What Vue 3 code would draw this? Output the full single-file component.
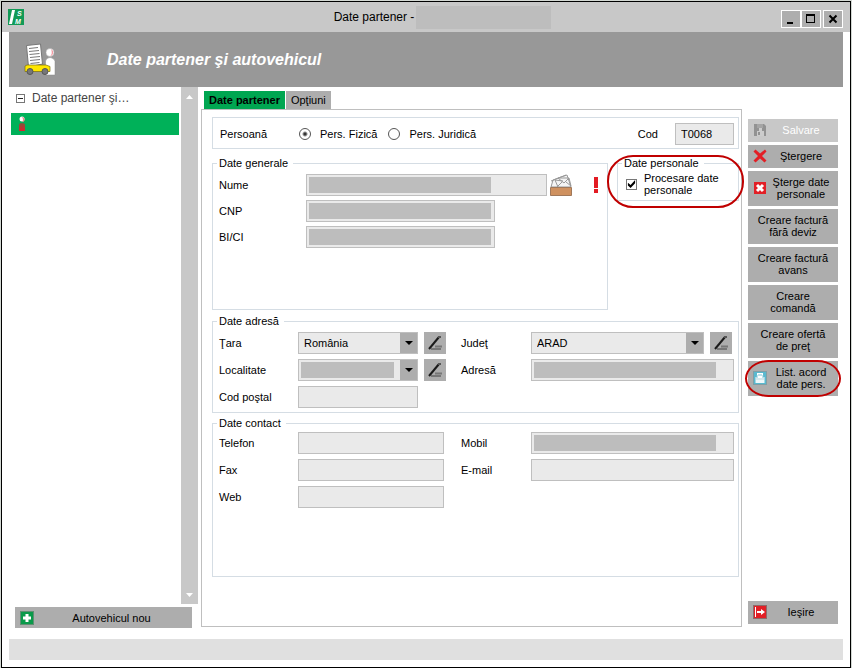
<script setup>
import { ref } from "vue";

const tab = ref("partener");
const persoana = ref("fizica");
const procesare = ref(true);
const tara = ref("România");
const judet = ref("ARAD");

// Butoanele din dreapta, de sus în jos
const actiuni = [
  { text: "Salvare", icon: "save", disabled: true },
  { text: "Ştergere", icon: "delete" },
  { text: "Şterge date\npersonale", icon: "erase" },
  { text: "Creare factură\nfără deviz" },
  { text: "Creare factură\navans" },
  { text: "Creare\ncomandă" },
  { text: "Creare ofertă\nde preţ" },
  { text: "List. acord\ndate pers.", icon: "print", marcat: true },
];
</script>

<template>
  <div class="window">
    <header class="titlebar">
      <svg class="logo" viewBox="0 0 16 16" aria-hidden="true">
        <rect width="16" height="16" fill="#129a57" />
        <path d="M4 1h3L4 15H1z" fill="#fff" />
        <text x="9" y="7">S</text>
        <text x="7" y="15">M</text>
      </svg>
      <div class="title">
        <span>Date partener -</span>
        <span class="title-mask"></span>
      </div>
      <div class="win-buttons">
        <button aria-label="Minimizare">
          <svg viewBox="0 0 18 16"><path d="M5 11h6v2H5z" /></svg>
        </button>
        <button aria-label="Maximizare">
          <svg viewBox="0 0 18 16"><path d="M4 3h9v9H4zM5 5v6h7V5z" fill-rule="evenodd" /></svg>
        </button>
        <button class="close" aria-label="Închidere">
          <svg viewBox="0 0 18 16"><path d="M5.500 4.500l7 7M12.500 4.500l-7 7" stroke="#000" stroke-width="2" /></svg>
        </button>
      </div>
    </header>

    <div class="banner">
      <svg class="banner-icon" viewBox="0 0 32 34" aria-hidden="true">
        <path d="M2.500 2.500l14-1.500 2 20-14 3z" fill="#fff" stroke="#777" />
        <path d="M5 5.500l9-1M5 8.500l10-1M5.500 11.500l10-1M6 14.500l10-1M6 17.500l10-1M6.500 20.500l9-1" stroke="#777" />
        <path d="M21.500 32V18q1-3.500 4.500-3.500t5 3.500v14z" fill="#fff" stroke="#888" stroke-width=".5" />
        <circle cx="26" cy="9.500" r="4" fill="#fff" stroke="#aaa" stroke-width=".5" />
        <path d="M27 6a4 4 0 0 1-1 7.500q3-3 1-7.500z" fill="#f4969f" />
        <path d="M1 23l2-1h19l4 1.500v5H1z" fill="#ffe600" stroke="#7a6d10" stroke-width=".7" />
        <circle cx="6" cy="28.500" r="3" fill="#777" stroke="#555" />
        <circle cx="21" cy="28.500" r="3" fill="#777" stroke="#555" />
      </svg>
      <h1>Date partener şi autovehicul</h1>
    </div>

    <main class="main">
      <aside class="side">
        <div class="tree-wrap">
          <div class="tree">
            <div class="tree-root">
              <button class="expander" aria-label="Restrânge"></button>
              <span>Date partener şi…</span>
            </div>
            <div class="tree-item">
              <svg viewBox="0 0 8 16" aria-hidden="true">
                <defs>
                  <linearGradient id="corp" x1="0" y1="0" x2="0" y2="1">
                    <stop offset="0" stop-color="#7a5a3c" />
                    <stop offset="1" stop-color="#e0202c" />
                  </linearGradient>
                </defs>
                <circle cx="4" cy="3" r="2.500" fill="#fff" />
                <path d="M4 1a2 2 0 0 1 0 5q2-2 0-5z" fill="#f08a90" />
                <path d="M1 15V9q0-2 3-2t3 2v6z" fill="url(#corp)" />
              </svg>
            </div>
          </div>
          <div class="scrollbar">
            <svg viewBox="0 0 7 4"><path d="M0 4L3.500 0 7 4z" fill="#fff" /></svg>
            <svg viewBox="0 0 7 4"><path d="M0 0h7L3.500 4z" fill="#fff" /></svg>
          </div>
        </div>
        <button class="btn btn-new">
          <svg class="icon" viewBox="0 0 14 14" aria-hidden="true">
            <rect x=".5" y=".5" width="13" height="13" fill="#0a9a4a" stroke="#5f8f72" />
            <path d="M5.500 3h3v2.500H11v3H8.500V11h-3V8.500H3v-3h2.500z" fill="#fff" />
          </svg>
          <span class="btn-text">Autovehicul nou</span>
        </button>
      </aside>

      <section class="center">
        <nav class="tabs">
          <button :class="{ active: tab === 'partener' }" @click="tab = 'partener'">Date partener</button>
          <button :class="{ active: tab === 'optiuni' }" @click="tab = 'optiuni'">Opţiuni</button>
        </nav>

        <div class="panel">
          <div class="person">
            <span class="label">Persoană</span>
            <label class="radio">
              <input v-model="persoana" type="radio" name="persoana" value="fizica" />
              Pers. Fizică
            </label>
            <label class="radio">
              <input v-model="persoana" type="radio" name="persoana" value="juridica" />
              Pers. Juridică
            </label>
            <label class="cod-label" for="cod">Cod</label>
            <input id="cod" class="field cod" type="text" value="T0068" />
          </div>

          <div class="top-groups">
            <fieldset class="general">
              <legend>Date generale</legend>
              <div class="row">
                <label for="nume">Nume</label>
                <input id="nume" class="field masked grow" type="text" />
                <button class="mail" aria-label="Corespondenţă">
                  <svg viewBox="0 0 22 22">
                    <path d="M1 13L3 6l8-3 6-2 4 12z" fill="#f4f4f4" stroke="#999" />
                    <path d="M1 7l15-6M5 6l3 7M5 6l8 1M8 4l11 0 2 8M8 4l6 5 5-5M7 13l5-5M21 12l-5-4" fill="none" stroke="#999" />
                    <path d="M.5 13.500h21v8H.5z" fill="#cf915f" stroke="#a0785a" />
                  </svg>
                </button>
                <svg class="warn" viewBox="0 0 4 16" aria-hidden="true">
                  <path d="M0 0h4v11H0zM0 12h4v4H0z" fill="#e31b23" />
                </svg>
              </div>
              <div class="row">
                <label for="cnp">CNP</label>
                <input id="cnp" class="field masked mid" type="text" />
              </div>
              <div class="row">
                <label for="bi">BI/CI</label>
                <input id="bi" class="field masked mid" type="text" />
              </div>
            </fieldset>

            <div class="personal ring">
              <fieldset>
                <legend>Date personale</legend>
                <label class="check">
                  <input v-model="procesare" type="checkbox" />
                  <span>Procesare date personale</span>
                </label>
              </fieldset>
            </div>
          </div>

          <fieldset class="address">
            <legend>Date adresă</legend>
            <div class="cols">
              <div class="col">
                <div class="row">
                  <label for="tara">Ţara</label>
                  <span class="combo">
                    <select id="tara" v-model="tara" class="field"><option>România</option></select>
                    <span class="arrow"></span>
                  </span>
                  <button class="edit" aria-label="Modifică ţara">
                    <svg viewBox="0 0 22 22">
                      <path d="M7 17h10M11 14.500h7" stroke="#777" stroke-width="2" />
                      <path d="M5 17L15 5" stroke="#1a1a1a" stroke-width="2" />
                      <path d="M14 5h3" stroke="#555" stroke-width="2" />
                    </svg>
                  </button>
                </div>
                <div class="row">
                  <label for="localitate">Localitate</label>
                  <span class="combo">
                    <select id="localitate" class="field masked small"><option></option></select>
                    <span class="arrow"></span>
                  </span>
                  <button class="edit" aria-label="Modifică localitatea">
                    <svg viewBox="0 0 22 22">
                      <path d="M7 17h10M11 14.500h7" stroke="#777" stroke-width="2" />
                      <path d="M5 17L15 5" stroke="#1a1a1a" stroke-width="2" />
                      <path d="M14 5h3" stroke="#555" stroke-width="2" />
                    </svg>
                  </button>
                </div>
                <div class="row">
                  <label for="cp">Cod poştal</label>
                  <input id="cp" class="field postal" type="text" />
                </div>
              </div>
              <div class="col right">
                <div class="row">
                  <label for="judet">Judeţ</label>
                  <span class="combo">
                    <select id="judet" v-model="judet" class="field"><option>ARAD</option></select>
                    <span class="arrow"></span>
                  </span>
                  <button class="edit last" aria-label="Modifică judeţul">
                    <svg viewBox="0 0 22 22">
                      <path d="M7 17h10M11 14.500h7" stroke="#777" stroke-width="2" />
                      <path d="M5 17L15 5" stroke="#1a1a1a" stroke-width="2" />
                      <path d="M14 5h3" stroke="#555" stroke-width="2" />
                    </svg>
                  </button>
                </div>
                <div class="row">
                  <label for="adresa">Adresă</label>
                  <input id="adresa" class="field masked grow" type="text" />
                </div>
              </div>
            </div>
          </fieldset>

          <fieldset class="contact">
            <legend>Date contact</legend>
            <div class="cols">
              <div class="col">
                <div class="row">
                  <label for="telefon">Telefon</label>
                  <input id="telefon" class="field phone" type="text" />
                </div>
                <div class="row">
                  <label for="fax">Fax</label>
                  <input id="fax" class="field phone" type="text" />
                </div>
                <div class="row">
                  <label for="web">Web</label>
                  <input id="web" class="field phone" type="text" />
                </div>
              </div>
              <div class="col right">
                <div class="row">
                  <label for="mobil">Mobil</label>
                  <input id="mobil" class="field masked grow" type="text" />
                </div>
                <div class="row">
                  <label for="email">E-mail</label>
                  <input id="email" class="field grow" type="text" />
                </div>
              </div>
            </div>
          </fieldset>
        </div>
      </section>

      <aside class="actions">
        <button
          v-for="a in actiuni"
          :key="a.text"
          class="btn"
          :class="{ ring: a.marcat }"
          :disabled="a.disabled"
        >
          <svg v-if="a.icon" class="icon" viewBox="0 0 14 14" aria-hidden="true">
            <g v-if="a.icon === 'save'">
              <path d="M1 1h10l2 2v10H1z" fill="#929292" />
              <path d="M4 1h6v4H4z" fill="#a5a5a5" />
              <path d="M4 8h7v5H4z" fill="#ccc" />
              <path d="M6 5h3v3H6z" fill="#ccc" />
              <path d="M5 9h2v3H5z" fill="#929292" />
            </g>
            <path
              v-else-if="a.icon === 'delete'"
              d="M2.500 .5L7 4.500 12 .5 13.500 2.500 9 7l4.500 4.500-2 2L7 9.500 2.500 13.500.5 11.500 5 7 .5 2.500z"
              fill="#e21f26"
            />
            <g v-else-if="a.icon === 'erase'">
              <rect x="1" y="1" width="12" height="12" fill="#e21f26" />
              <path d="M4 4l6 6M10 4l-6 6" stroke="#fff" stroke-width="3" />
            </g>
            <g v-else>
              <rect x=".5" y=".5" width="13" height="13" fill="#58b9cf" stroke="#7f9ea6" />
              <path d="M2.500 6h9v6h-9z" fill="#eef8fb" />
              <path d="M4 2h6v5H4z" fill="#fff" />
              <path d="M4 4v3M6 3v2M8 3v2M10 4v3" stroke="#7cc4d4" />
              <path d="M3 8h8" stroke="#b9d5dc" />
            </g>
          </svg>
          <span class="btn-text">{{ a.text }}</span>
        </button>
        <button class="btn exit">
          <svg class="icon" viewBox="0 0 14 14" aria-hidden="true">
            <rect x=".5" y=".5" width="13" height="13" fill="#e21f26" stroke="#8e6a6a" />
            <path d="M2 2h1v10H2zM4 6h4V4l4 3-4 3V8H4z" fill="#fff" />
          </svg>
          <span class="btn-text">Ieşire</span>
        </button>
      </aside>
    </main>

    <footer class="status"></footer>
  </div>
</template>

<style>
body {
  margin: 0;
  background: #d3d8d3;
}
</style>

<style scoped>
* {
  box-sizing: border-box;
}
.window {
  display: flex;
  flex-direction: column;
  min-height: calc(100vh - 1px);
  margin: 1px 1px 0;
  border: 1px solid #000;
  background: #fff;
  color: #000;
  font-family: "Liberation Sans", Arial, sans-serif;
  font-size: 11px;
  line-height: 12px;
}
button,
input,
select {
  margin: 0;
  font: inherit;
  color: inherit;
}
button {
  padding: 0;
  border: 0;
}
svg {
  display: block;
  flex: none;
}

.titlebar {
  display: flex;
  align-items: center;
  height: 30px;
  padding: 0 7px 0 6px;
  background: #c8c8c8;
}
.logo {
  width: 16px;
  height: 16px;
}
.logo text {
  font-size: 7px;
  font-weight: bold;
  font-style: italic;
  fill: #fff;
}
.title {
  display: flex;
  flex: 1;
  align-items: center;
  justify-content: center;
  padding-left: 80px;
  font-size: 12px;
}
.title-mask {
  width: 135px;
  height: 23px;
  margin-left: 2px;
  background: #bdbdbd;
}
.win-buttons {
  display: flex;
  margin-top: 3px;
}
.win-buttons button {
  width: 20px;
  height: 18px;
  border: 1px solid #fff;
  background: #aeaeae;
}
.win-buttons .close {
  margin-left: 2px;
}

.banner {
  display: flex;
  align-items: center;
  gap: 51px;
  height: 55px;
  margin: 0 7px;
  padding-left: 15px;
  background: #989898;
  color: #fff;
}
.banner-icon {
  width: 32px;
  height: 34px;
}
h1 {
  margin: 0;
  font-size: 16px;
  line-height: 20px;
  font-style: italic;
}

.main {
  display: flex;
  flex: 1;
  padding: 0 12px 11px 7px;
}
.side {
  display: flex;
  flex-direction: column;
  width: 189px;
  margin-right: 3px;
}
.tree-wrap {
  display: flex;
  flex: 1;
}
.tree {
  flex: 1;
  padding: 4px 2px;
}
.tree-root {
  display: flex;
  align-items: center;
  gap: 7px;
  height: 14px;
  padding-left: 5px;
  color: #444;
  font-size: 12px;
}
.expander {
  width: 9px;
  height: 9px;
  border: 1px solid #777;
  background: linear-gradient(#222, #222) center / 5px 1px no-repeat #fff;
}
.tree-item {
  display: flex;
  align-items: center;
  height: 22px;
  margin-top: 8px;
  padding-left: 7px;
  background: #00b159;
}
.tree-item svg {
  width: 8px;
  height: 16px;
}
.scrollbar {
  display: flex;
  flex-direction: column;
  align-items: center;
  justify-content: space-between;
  width: 17px;
  padding: 8px 0 7px;
  background: #c8c8c8;
}
.scrollbar svg {
  width: 7px;
  height: 4px;
}

.btn {
  position: relative;
  display: flex;
  align-items: center;
  justify-content: center;
  min-height: 23px;
  padding: 5px 0 6px;
  background: #adadad;
}
.btn:disabled {
  background: #c8c8c8;
  color: #fff;
}
.btn-text {
  flex: 1;
  white-space: pre-line;
  text-align: center;
}
.icon {
  width: 14px;
  height: 14px;
  margin: -1px -3px -1px 5px;
}
.btn-new {
  min-height: 21px;
  margin: 3px 6px 0;
  padding: 4px 0;
}

.center {
  display: flex;
  flex: 1;
  flex-direction: column;
  min-width: 0;
  padding: 4px 0 1px;
}
.tabs {
  display: flex;
  gap: 1px;
  padding-left: 3px;
}
.tabs button {
  height: 18px;
  padding: 0 5px;
  background: #adadad;
}
.tabs .active {
  background: #00a651;
  font-weight: bold;
}
.panel {
  flex: 1;
  padding: 7px 2px 0 10px;
  border: 1px solid #bfbfbf;
}
.person {
  display: flex;
  align-items: center;
  padding: 5px 4px 3px 7px;
  border: 1px solid #d5dde4;
}
.person .label {
  width: 79px;
}
.radio {
  display: flex;
  align-items: center;
  gap: 9px;
  margin-right: 11px;
}
.radio input {
  appearance: none;
  width: 12px;
  height: 12px;
  border: 1px solid #555;
  border-radius: 50%;
  background: #fff;
}
.radio input:checked {
  background: radial-gradient(circle, #333 1px, #fff 3px);
}
.cod-label {
  margin: 0 17px 0 auto;
}
.cod {
  width: 59px;
}
.field {
  height: 22px;
  min-width: 0;
  padding: 0 5px;
  border: 1px solid #bfbfbf;
  border-radius: 0;
  background: #eaeaea;
  outline: none;
}
.masked {
  background: linear-gradient(#bdbdbd, #bdbdbd) 2px center / 182px 16px no-repeat #eaeaea;
}
.masked.small {
  background-size: 93px 16px;
}
.grow {
  flex: 1;
}
.mid {
  width: 189px;
}
.postal {
  width: 120px;
}
.phone {
  width: 146px;
}

fieldset {
  min-width: 0;
  margin: 0;
  padding: 5px 4px 4px 6px;
  border: 1px solid #d5dde4;
}
legend {
  margin-left: -2px;
  padding: 0 5px 0 2px;
}
.top-groups {
  display: flex;
  align-items: flex-start;
  gap: 9px;
  margin: 8px 0 5px;
}
.general {
  flex: 1;
  padding-bottom: 61px;
}
.row {
  display: flex;
  align-items: center;
}
.general .row + .row {
  margin-top: 4px;
}
.row label {
  flex: none;
  width: 79px;
}
.general .row label {
  width: 87px;
}
.right .row label {
  width: 70px;
}
.mail {
  width: 22px;
  height: 22px;
  margin-left: 3px;
  background: none;
}
.warn {
  width: 4px;
  height: 16px;
  margin: 0 5px 0 22px;
}
.personal {
  position: relative;
  width: 122px;
}
.personal fieldset {
  padding: 3px 4px 4px 8px;
}
.personal legend {
  margin-left: -4px;
}
.check {
  display: flex;
  align-items: center;
  gap: 7px;
}
.check input {
  appearance: none;
  flex: none;
  width: 11px;
  height: 11px;
  border: 1px solid #777;
  background: #fff;
}
.check input:checked::before {
  content: "";
  display: block;
  width: 9px;
  height: 9px;
  background: #000;
  clip-path: polygon(10% 35%, 40% 60%, 90% 5%, 90% 42%, 40% 95%, 10% 68%);
}

/* Încercuire roşie pentru elementele evidenţiate */
.ring::after {
  content: "";
  position: absolute;
  inset: -1px -3px -1px;
  border: 2px solid #c00000;
  border-radius: 24px / 19px;
  pointer-events: none;
}
.personal.ring::after {
  inset: -2px -5px -7px -10px;
  border-radius: 26px;
}

.address {
  margin-bottom: 4px;
}
.contact {
  padding-top: 3px;
  padding-bottom: 68px;
}
.cols {
  display: flex;
  gap: 15px;
}
.col {
  display: flex;
  flex-direction: column;
  gap: 5px;
  width: 227px;
}
.col.right {
  flex: 1;
  width: auto;
}
.combo {
  position: relative;
  display: flex;
  flex: 1;
}
.combo select {
  appearance: none;
  width: 100%;
}
.arrow {
  position: absolute;
  top: 1px;
  right: 1px;
  bottom: 1px;
  width: 17px;
  background: #adadad;
  pointer-events: none;
}
.arrow::before {
  content: "";
  position: absolute;
  top: 8px;
  left: 5px;
  border: 4px solid transparent;
  border-top-color: #000;
  border-bottom: 0;
}
.edit {
  width: 22px;
  height: 22px;
  margin-left: 6px;
  background: #adadad;
}
.edit.last {
  margin-right: 2px;
}

.actions {
  display: flex;
  flex-direction: column;
  gap: 3px;
  width: 90px;
  margin-left: 6px;
  padding: 32px 0 4px;
}
.exit {
  margin-top: auto;
}
.status {
  height: 21px;
  margin: 0 7px 7px;
  background: #e0e0e0;
}
</style>
